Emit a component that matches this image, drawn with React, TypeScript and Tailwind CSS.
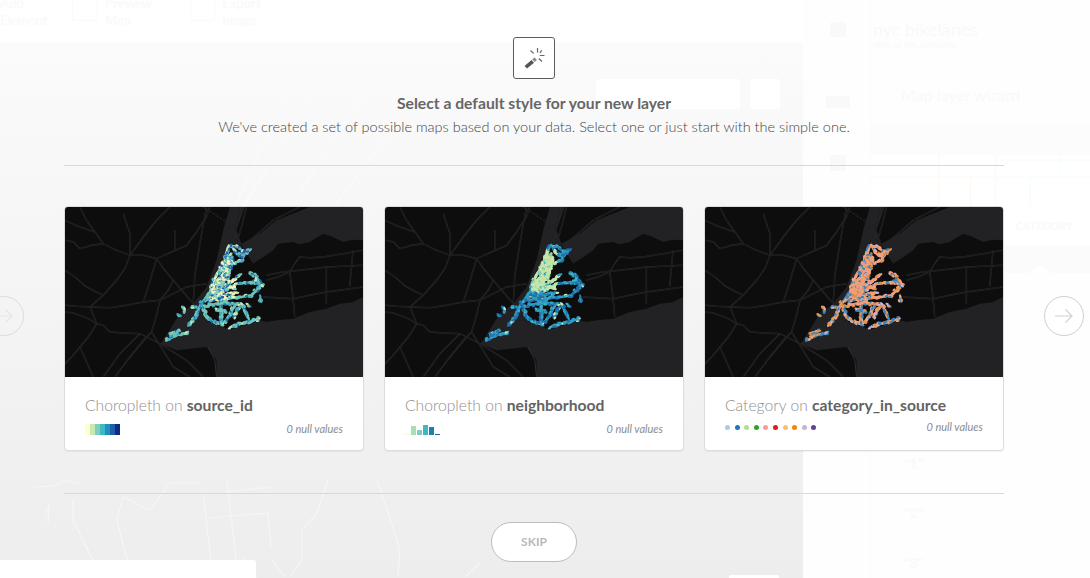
const ROADS: string[] = [
  "15,120 40,125 60,145 95,135 130,130 170,150 210,165 250,165 290,175 315,210 340,240 325,270 300,300 290,345 275,395 240,435 210,470 165,530",
  "15,315 50,318 90,320 150,322 200,315 250,305 300,300 340,280 380,260 440,250",
  "90,320 100,345 110,370 130,375 150,395 195,398 240,400 270,415 300,430",
  "15,335 40,338 60,345 85,355 110,370 85,410 60,440 35,470 15,490",
  "210,165 195,205 170,240 130,285 90,320",
  "290,175 335,155 380,135 410,95 440,50 450,20",
  "130,130 105,95 80,60 60,20",
  "340,240 370,275 400,310 405,225 420,130 440,20",
  "210,165 250,110 290,60 330,20",
  "275,395 310,450 340,500 390,530",
  "540,20 525,90 505,140",
  "560,130 600,95 640,60 680,40 720,20",
  "620,225 670,215 720,210 760,205 800,200 850,198 910,195",
  "610,290 650,292 700,295 750,285 800,275 850,268 910,260",
  "620,240 655,230 690,215 705,190 720,170 750,172 790,170 850,160 910,150",
  "700,295 705,350",
  "800,200 800,275 800,310",
  "690,215 695,255 700,295",
  "880,150 875,205 870,260",
  "210,470 250,420 275,395",
  "130,530 180,460 240,400",
  "60,440 80,485 100,530",
  "15,210 45,230 80,260 130,285",
  "250,305 265,260 290,175",
  "345,90 345,150",
  "190,40 210,100 210,165",
  "560,20 545,80 530,130",
  "15,60 60,80 105,95",
  "440,300 380,345 330,400",
  "300,430 380,480 430,530",
];
const DATA: [number, number][][] = [
  [[510,135],[530,140],[560,155],[545,180],[520,190],[500,165],[510,135]],
  [[520,145],[535,165],[570,150]],
  [[505,150],[490,190],[470,225],[455,260],[450,290]],
  [[512,160],[498,195],[482,230],[468,265],[462,290]],
  [[520,170],[505,205],[490,240],[478,270]],
  [[495,175],[515,200],[490,215],[475,235]],
  [[480,200],[510,215],[500,240],[470,240],[460,270],[490,275],[530,250],[590,245],[610,255]],
  [[465,250],[490,255],[520,240],[540,225]],
  [[455,275],[480,285],[505,280],[530,275]],
  [[470,260],[500,262],[525,262]],
  [[455,290],[475,275],[495,290]],
  [[570,215],[590,230],[605,255],[575,285]],
  [[450,290],[500,295],[540,290],[575,285]],
  [[445,300],[475,295],[500,305]],
  [[430,320],[470,310],[520,310],[545,310],[565,355]],
  [[430,325],[445,355],[470,370],[490,370],[510,345],[525,315]],
  [[485,315],[485,370]],
  [[470,330],[500,335]],
  [[510,380],[560,365],[600,355]],
  [[545,315],[520,350]],
  [[370,320],[375,335]],
  [[395,320],[415,320],[410,345],[385,375]],
  [[420,315],[435,295],[450,275]],
  [[320,420],[350,405],[385,395]],
  [[330,400],[345,395],[360,390]],
  [[355,345],[362,348]],
  [[600,290],[605,305]],
  [[565,315],[572,318]],
];

type Seg = { x1: number; y1: number; x2: number; y2: number; r: number };
function buildSegs(): Seg[] {
  let s = 17;
  const rnd = () => {
    s = (s * 16807) % 2147483647;
    return (s % 1000) / 1000;
  };
  const out: Seg[] = [];
  for (const line of DATA) {
    for (let i = 0; i < line.length - 1; i++) {
      const [a, b] = line[i];
      const [c, d] = line[i + 1];
      const n = Math.max(1, Math.round(Math.hypot(c - a, d - b) / 4));
      for (let pass = 0; pass < 2; pass++) {
        for (let k = 0; k < n; k++) {
          const spread = pass === 0 ? 3 : 11;
          const j1 = (rnd() - 0.5) * spread;
          const j2 = (rnd() - 0.5) * spread;
          out.push({
            x1: a + ((c - a) * k) / n + j1,
            y1: b + ((d - b) * k) / n + j2,
            x2: a + ((c - a) * (k + 1)) / n + j1,
            y2: b + ((d - b) * (k + 1)) / n + j2,
            r: rnd(),
          });
        }
      }
    }
  }
  return out;
}
const SEGS = buildSegs();

function colorA(g: Seg) {
  if (g.y1 < 300 && g.x1 > 450 && g.x1 < 530 && g.y1 > 180) {
    return g.r < 0.42 ? "#f4f1b8" : g.r < 0.65 ? "#7fcdbb" : g.r < 0.85 ? "#225ea8" : "#41b6c4";
  }
  if (g.y1 < 180) return g.r < 0.35 ? "#225ea8" : g.r < 0.75 ? "#5fb8c4" : "#c7e9b4";
  return g.r < 0.62 ? "#6fc4b8" : g.r < 0.78 ? "#41a6c4" : g.r < 0.9 ? "#1d6fb0" : "#c7e9b4";
}
function colorB(g: Seg) {
  if (g.y1 < 275 && g.x1 > 455 && g.x1 < 535 && g.y1 > 150) {
    return g.r < 0.78 ? "#c5e6a8" : g.r < 0.92 ? "#7fcdbb" : "#41b6c4";
  }
  return g.r < 0.5 ? "#2f9cc0" : g.r < 0.85 ? "#1f6fae" : g.r < 0.95 ? "#41b6c4" : "#c7e9b4";
}
function colorC(g: Seg) {
  if (g.y1 < 320 && g.x1 > 445 && g.x1 < 590) {
    return g.r < 0.62 ? "#f0a07a" : g.r < 0.74 ? "#e88a3c" : g.r < 0.92 ? "#3d85b8" : "#cab2d6";
  }
  return g.r < 0.42 ? "#3d85b8" : g.r < 0.68 ? "#e8954a" : g.r < 0.86 ? "#f0a07a" : "#cab2d6";
}

function MapPicture({ color }: { color: (g: Seg) => string }) {
  return (
    <svg viewBox="15 20 895 510" className="block h-[170px] w-[298px] blur-[0.25px]" preserveAspectRatio="none">
      <rect x="15" y="20" width="895" height="510" fill="#222224" />
      <polygon
        fill="#0d0d0e"
        points="15,20 510,20 490,90 470,180 440,260 400,310 360,340 310,420 300,430 350,450 440,440 470,480 470,530 15,530"
      />
      <polygon fill="#0d0d0e" points="555,20 530,90 545,130 600,100 650,60 750,20" />
      <polygon
        fill="#0d0d0e"
        points="505,140 545,135 580,190 610,170 640,150 655,130 700,125 720,132 750,125 790,100 820,110 850,125 880,118 910,120 910,290 880,305 840,310 800,325 750,335 700,355 650,360 620,365 600,360 510,388 440,362 428,322 450,280"
      />
      <polyline points="430,20 500,65" fill="none" stroke="#555" strokeWidth="1.5" strokeDasharray="6 6" />
      <polyline points="445,440 465,480 470,530" fill="none" stroke="#2e2e30" strokeWidth="3" />
      {ROADS.map((r) => (
        <g key={r}>
          <polyline points={r} fill="none" stroke="#2f2f31" strokeWidth="4.5" />
          <polyline points={r} fill="none" stroke="#101011" strokeWidth="2.2" />
        </g>
      ))}
      <g strokeLinecap="round" strokeWidth="6.5">
        {SEGS.map((g, i) => (
          <line key={i} x1={g.x1} y1={g.y1} x2={g.x2} y2={g.y2} stroke={color(g)} />
        ))}
      </g>
    </svg>
  );
}

function Card({
  kind,
  field,
  color,
  legend,
  rowClass,
}: {
  kind: string;
  field: string;
  color: (g: Seg) => string;
  legend: React.ReactNode;
  rowClass: string;
}) {
  return (
    <div className="w-[300px] overflow-hidden rounded-[4px] border border-[#dcdcdc] bg-white shadow-[0_1px_1px_rgba(0,0,0,0.05)]">
      <MapPicture color={color} />
      <div className="flex h-[73px] flex-col px-5 pt-[18px]">
        <div className="text-[15.65px] leading-[20px] font-light text-[#8f8f8f]">
          {kind} on <span className="font-bold text-[#636363]">{field}</span>
        </div>
        <div className={`flex h-[14px] items-center justify-between ${rowClass}`}>
          {legend}
          <span className="text-[11px] text-[#8c8c8c] italic">0 null values</span>
        </div>
      </div>
    </div>
  );
}

const RAMP = ["bg-[#ffffcc]", "bg-[#c7e9b4]", "bg-[#7fcdbb]", "bg-[#41b6c4]", "bg-[#1d91c0]", "bg-[#225ea8]", "bg-[#0c2c84]"];
const BLOCK_LEGEND = (
  <div className="flex">
    {RAMP.map((c) => (
      <span key={c} className={`h-[11px] w-[5px] ${c}`} />
    ))}
  </div>
);
const BARS = [
  ["bg-[#ffffcc]", "h-[2px]"],
  ["bg-[#a9ddb7]", "h-[9px]"],
  ["bg-[#7fcdbb]", "h-[5px]"],
  ["bg-[#41b6c4]", "h-[10px]"],
  ["bg-[#1d81b0]", "h-[8px]"],
  ["bg-[#225ea8]", "h-[1px]"],
];
const BAR_LEGEND = (
  <div className="flex h-[11px] items-end gap-[1.2px]">
    {BARS.map(([c, h]) => (
      <span key={c} className={`w-[4.8px] ${c} ${h}`} />
    ))}
  </div>
);
const DOTS = [
  "bg-[#a6cee3]",
  "bg-[#1f78b4]",
  "bg-[#b2df8a]",
  "bg-[#33a02c]",
  "bg-[#fb9a99]",
  "bg-[#e31a1c]",
  "bg-[#fdbf6f]",
  "bg-[#ff7f00]",
  "bg-[#cab2d6]",
  "bg-[#6a3d9a]",
];
const DOT_LEGEND = (
  <div className="flex gap-[4.6px]">
    {DOTS.map((c) => (
      <span key={c} className={`h-[5px] w-[5px] rounded-full ${c}`} />
    ))}
  </div>
);

function Background() {
  return (
    <div className="flex h-full flex-col font-['Lato',sans-serif]">
      <div className="flex h-[42px] w-[803px] shrink-0 bg-white">
        <div className="flex -translate-y-[5px] gap-[25px] text-[13px] leading-[17px] font-bold text-[#fafafa]">
          <div className="w-[47px]">
            Add
            <br />
            Element
          </div>
          <div className="mt-[1px] h-[25px] w-[26px] border border-[#fafafa]" />
          <div className="-ml-[18px] w-[60px]">
            Preview
            <br />
            Map
          </div>
          <div className="mt-[1px] h-[25px] w-[25px] border border-[#fafafa]" />
          <div className="-ml-[18px]">
            Export
            <br />
            Image
          </div>
        </div>
      </div>
      <div className="flex min-h-0 flex-1">
        <div className="relative w-[803px] bg-linear-to-b from-[#fbfbfb] to-[#ededed]">
          <svg viewBox="0 0 803 536" className="block h-full w-full" fill="none" stroke="#f6f6f6" strokeWidth="1.1">
            <path d="M300 20 L255 120 L220 200 M340 0 L290 90 L240 170 M370 40 L300 150 M390 90 L330 170" stroke="#fbfbfb" />
            <path d="M33 445 L55 444 L66 438 L78 442 M73 458 L73 478 L93 518 M45 472 L49 463 L48 481" />
            <path d="M123 455 L117 478 L125 511 L128 518 M150 468 L170 441 L200 441 M150 468 L123 455" />
            <path d="M203 451 L213 535 M227 438 L238 535 M207 476 L268 471 L271 505 M227 450 L270 445" />
            <path d="M328 438 L317 471 L302 488 L302 518 L290 535" />
            <path d="M377 438 L388 471 L400 508 L398 535" />
            <path d="M243 515 L257 535 M272 518 L285 535 M480 521 L465 535" />
          </svg>
          <div className="absolute top-[37px] left-[596px] h-[30px] w-[144px] rounded-[2px] bg-white" />
          <div className="absolute top-[37px] left-[750px] h-[30px] w-[30px] rounded-[2px] bg-white" />
          <div className="absolute bottom-0 left-0 h-[18px] w-[256px] rounded-tr-[3px] bg-white" />
          <div className="absolute bottom-0 left-[729px] h-[3px] w-[50px] rounded-t-[2px] bg-white" />
        </div>
        <div className="-mt-[42px] flex flex-1 bg-[#fefefe]">
          <div className="flex w-[67px] shrink-0 flex-col items-center pt-[22px] pl-[2px]">
            <div className="h-[15px] w-[16px] rounded-[2px] bg-[#f9f9f9]" />
            <div className="mt-[59px] h-[12px] w-[24px] bg-[#f9f9f9]" />
            <div className="mt-[47px] h-[16px] w-[16px] bg-[#f9f9f9]" />
          </div>
          <div className="flex min-w-0 flex-1 flex-col border-l border-[#fbfbfb] text-[#f9f9f9]">
            <div className="h-[64px] shrink-0 pt-[19px] pl-[2px]">
              <div className="text-[18px] leading-[20px] whitespace-nowrap">nyc bikelanes</div>
              <div className="text-[9px] leading-[12px] whitespace-nowrap">view of nyc bikelanes</div>
            </div>
            <div className="h-[61px] shrink-0 pt-[21px] pl-[30px] text-[16px] leading-[20px] whitespace-nowrap">Map layer wizard</div>
            <div className="flex h-[148px] shrink-0 flex-col bg-[#fcfcfc]">
              <div className="mt-[30px] h-[52px] shrink-0 bg-white">
                <svg viewBox="0 0 220 52" className="h-full w-full" fill="none" strokeWidth="1">
                  <path d="M0 22 H125 M68 0 V52 M100 22 V52" stroke="#fef7f3" />
                  <path d="M125 5 H220 M125 22 H220 M160 22 V52 M190 0 V22" stroke="#f5fcfd" />
                  <path d="M125 0 V52" stroke="#fcfcfc" strokeWidth="3" />
                </svg>
              </div>
              <div className="flex flex-1 items-center justify-end bg-white pr-[17px] text-[11px] font-bold">CATEGORY</div>
              <div className="flex h-[28px] shrink-0 justify-end bg-[#fbfbfb] pr-[40px]">
                <div className="mt-[20px] h-0 w-0 border-x-[10px] border-b-[8px] border-x-transparent border-b-white" />
              </div>
            </div>
            <div className="flex flex-col pt-[181px] pl-[33px] text-[14px] font-bold">
              <div className="h-[49px] leading-[20px]">"1"</div>
              <div className="h-[50px] leading-[20px]">"2"</div>
              <div className="leading-[20px]">"3"</div>
            </div>
          </div>
        </div>
      </div>
    </div>
  );
}

function ArrowCircle({ className, light }: { className: string; light?: boolean }) {
  return (
    <div className={`absolute top-[296px] flex h-10 w-10 items-center justify-center rounded-full border ${className}`}>
      <svg width="20" height="16" viewBox="0 0 20 16" fill="none" stroke={light ? "#e6e6e6" : "#d2d2d2"} strokeWidth="1.2">
        <path d="M1 8 H18 M11.5 1.5 L18 8 L11.5 14.5" />
      </svg>
    </div>
  );
}

export default function App() {
  return (
    <div className="relative h-[578px] w-[1090px] overflow-hidden bg-white font-['Lato',sans-serif]">
      <Background />
      <div className="absolute inset-y-0 left-0 flex w-[1068px] flex-col items-center pt-[37px]">
        <div className="flex h-[42px] w-[42px] items-center justify-center rounded-[3px] border border-[#5c5c5c] bg-white">
          <svg width="26" height="26" viewBox="0 0 26 26" fill="none">
            <path d="M3.5 21 L10.5 15 L13 17.7 L6 23.5 Z" fill="#555" />
            <path d="M11.2 14.3 L13.5 12.5 L16 15 L13.7 17 Z" fill="#8a8a8a" />
            <path
              d="M16.5 3 V7.5 M9.5 5.5 L12.7 8.4 M20.8 5.3 L18.8 8 M18.8 10.5 H23.5 M17.8 13.5 L21 16.5"
              stroke="#666"
              strokeWidth="1.2"
            />
          </svg>
        </div>
        <h1 className="mt-[14px] text-[15.7px] leading-[20px] font-bold whitespace-nowrap text-[#666]">
          Select a default style for your new layer
        </h1>
        <p className="mt-[4px] text-[14.5px] leading-[20px] font-light whitespace-nowrap text-[#444]">
          We've created a set of possible maps based on your data. Select one or just start with the simple one.
        </p>
        <div className="mt-[28px] h-px w-[940px] shrink-0 bg-[#d9d9d9]" />
        <div className="mt-[40px] flex gap-5">
          <Card kind="Choropleth" field="source_id" color={colorA} legend={BLOCK_LEGEND} rowClass="mt-[7px]" />
          <Card kind="Choropleth" field="neighborhood" color={colorB} legend={BAR_LEGEND} rowClass="mt-[7px]" />
          <Card kind="Category" field="category_in_source" color={colorC} legend={DOT_LEGEND} rowClass="mt-[5px]" />
        </div>
        <div className="mt-[42px] h-px w-[940px] shrink-0 bg-[#d9d9d9]" />
        <button className="mt-[28px] h-10 w-[86px] shrink-0 rounded-[20px] border border-[#bdbdbd] bg-white text-[12px] font-bold text-[#b8b8b8]">
          SKIP
        </button>
      </div>
      <ArrowCircle className="left-[-16px] border-[#dcdcdc]" light />
      <ArrowCircle className="left-[1044px] border-[#cfcfcf] bg-white" />
    </div>
  );
}
